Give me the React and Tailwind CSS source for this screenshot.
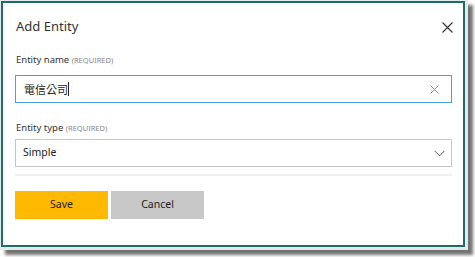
export default function App() {
    return (
        <div className="w-[475px] h-[257px] bg-white overflow-hidden" style={{ fontFamily: '"Noto Sans", "Noto Sans CJK TC", sans-serif' }}>
            <div className="w-[468px] h-[250px] bg-[#e4eaea] pl-[1px] pt-[1px] shadow-[5px_5px_3px_rgba(0,0,0,0.55)]">
                <div className="w-[464px] h-[246px] border-2 border-[#1f6a6a] bg-white flex flex-col px-[12px]">
                    <div className="flex items-center justify-between mt-[13px] h-[22px]">
                        <h2 className="text-[13px] text-[#333] pl-[1px]">Add Entity</h2>
                        <button className="w-[14px] h-[14px] -mr-[3px] flex items-center justify-center">
                            <svg width="11" height="11" viewBox="0 0 11 11">
                                <path d="M0.5 0.5 L10.5 10.5 M10.5 0.5 L0.5 10.5" stroke="#333" strokeWidth="1.1" fill="none" />
                            </svg>
                        </button>
                    </div>

                    <label className="mt-[14px] text-[9.5px] leading-[16px] text-[#333] pl-[1px]">
                        Entity name <span className="text-[7.5px] text-[#888]">(REQUIRED)</span>
                    </label>
                    <div className="mt-[7px] h-[28px] w-[437px] border border-[#4a9fe3] flex items-center justify-between pl-[8px] pr-[12px]">
                        <span className="text-[11px] text-[#222] flex items-center" style={{ fontFamily: '"Noto Sans CJK TC", sans-serif' }}>
                            電信公司<span className="inline-block w-[1px] h-[14px] bg-[#222]"></span>
                        </span>
                        <svg width="9" height="9" viewBox="0 0 9 9">
                            <path d="M0.5 0.5 L8.5 8.5 M8.5 0.5 L0.5 8.5" stroke="#888" strokeWidth="1" fill="none" />
                        </svg>
                    </div>

                    <label className="mt-[17px] text-[9.5px] leading-[16px] text-[#333] pl-[1px]">
                        Entity type <span className="text-[7.5px] text-[#888]">(REQUIRED)</span>
                    </label>
                    <div className="mt-[3px] h-[28px] w-[437px] border border-[#c6c6c6] flex items-center justify-between pl-[7px] pr-[6px]">
                        <span className="text-[10.5px] text-[#222]">Simple</span>
                        <svg width="11" height="7" viewBox="0 0 11 7">
                            <path d="M0.5 0.8 L5.5 5.8 L10.5 0.8" stroke="#555" strokeWidth="1" fill="none" />
                        </svg>
                    </div>

                    <div className="mt-[7px] h-[2px] w-[437px] bg-[#f0f0f0]"></div>

                    <div className="mt-[15px] flex gap-[3px]">
                        <button className="w-[93px] h-[28px] bg-[#ffb900] text-[10.5px] text-[#222]">Save</button>
                        <button className="w-[93px] h-[28px] bg-[#c8c8c8] text-[10.5px] text-[#222]">Cancel</button>
                    </div>
                </div>
            </div>
        </div>
    )
}
